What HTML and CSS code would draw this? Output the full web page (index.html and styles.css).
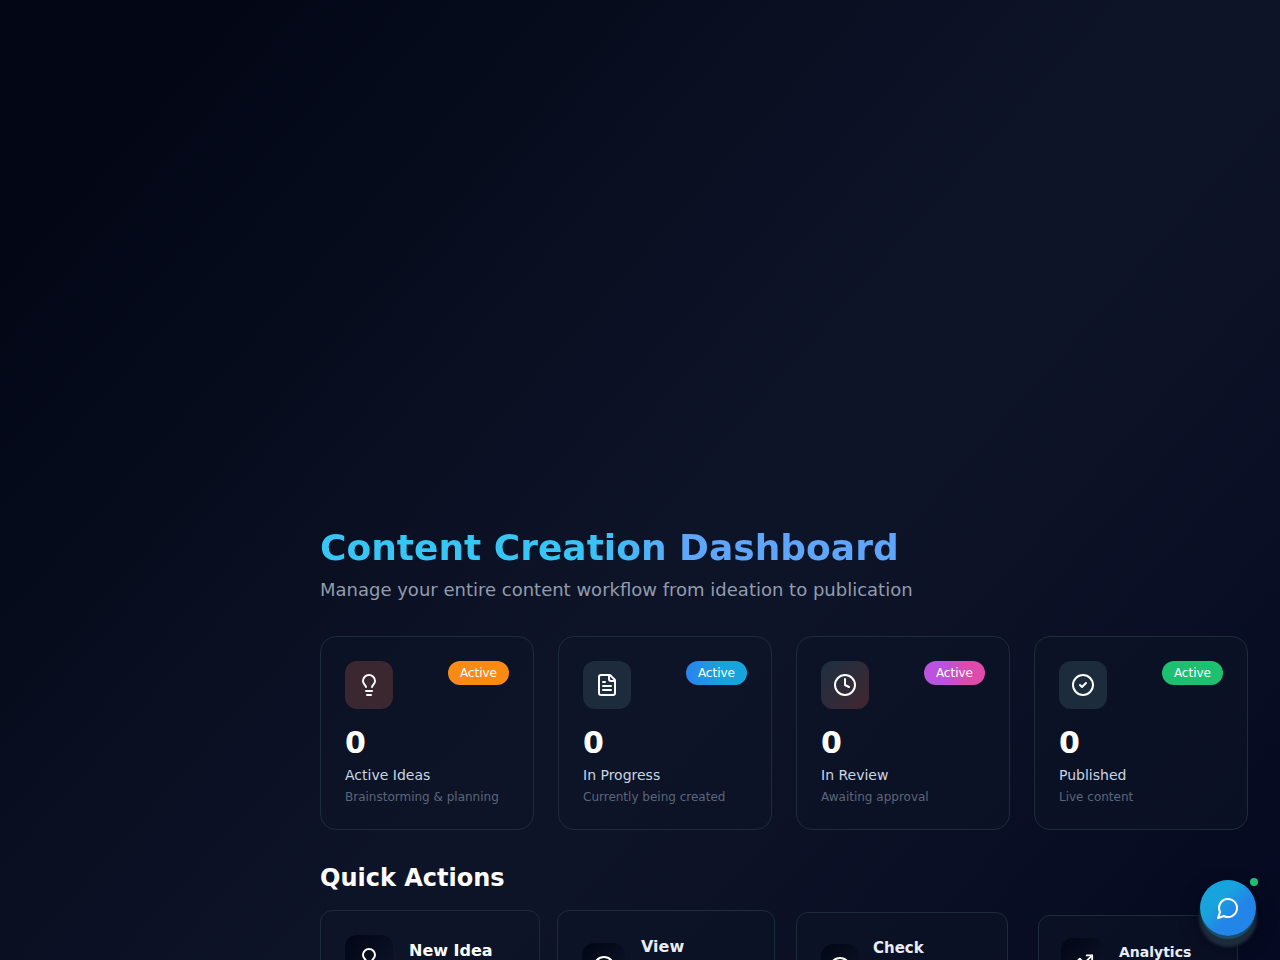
FILE: index.html
```html
<!DOCTYPE html>
<html lang="en">
<head>
    <meta charset="UTF-8">
    <meta name="viewport" content="width=device-width, initial-scale=1.0">
    <title>Content Creation Dashboard</title>
    <link rel="stylesheet" href="styles.css">
</head>
<body>

    <main class="dashboard">
        <header class="page-header">
            <h1>Content Creation Dashboard</h1>
            <p>Manage your entire content workflow from ideation to publication</p>
        </header>

        <section class="stats">
            <article class="stat-card">
                <div class="stat-top">
                    <div class="stat-icon icon-ideas">
                        <svg class="icon" viewBox="0 0 24 24"><path d="M15 14c.2-1 .7-1.700 1.500-2.500 1-.9 1.500-2.200 1.500-3.500A6 6 0 0 0 6 8c0 1 .2 2.200 1.500 3.500.7.7 1.300 1.500 1.500 2.500"/><path d="M9 18h6"/><path d="M10 22h4"/></svg>
                    </div>
                    <span class="badge badge-orange">Active</span>
                </div>
                <div class="stat-value">0</div>
                <h3>Active Ideas</h3>
                <p>Brainstorming &amp; planning</p>
            </article>

            <article class="stat-card">
                <div class="stat-top">
                    <div class="stat-icon icon-progress">
                        <svg class="icon" viewBox="0 0 24 24"><path d="M15 2H6a2 2 0 0 0-2 2v16a2 2 0 0 0 2 2h12a2 2 0 0 0 2-2V7Z"/><path d="M14 2v4a2 2 0 0 0 2 2h4"/><path d="M10 9H8"/><path d="M16 13H8"/><path d="M16 17H8"/></svg>
                    </div>
                    <span class="badge badge-blue">Active</span>
                </div>
                <div class="stat-value">0</div>
                <h3>In Progress</h3>
                <p>Currently being created</p>
            </article>

            <article class="stat-card">
                <div class="stat-top">
                    <div class="stat-icon icon-review">
                        <svg class="icon" viewBox="0 0 24 24"><circle cx="12" cy="12" r="10"/><path d="M12 6v6l4 2"/></svg>
                    </div>
                    <span class="badge badge-pink">Active</span>
                </div>
                <div class="stat-value">0</div>
                <h3>In Review</h3>
                <p>Awaiting approval</p>
            </article>

            <article class="stat-card">
                <div class="stat-top">
                    <div class="stat-icon icon-published">
                        <svg class="icon" viewBox="0 0 24 24"><circle cx="12" cy="12" r="10"/><path d="m9 12 2 2 4-4"/></svg>
                    </div>
                    <span class="badge badge-green">Active</span>
                </div>
                <div class="stat-value">0</div>
                <h3>Published</h3>
                <p>Live content</p>
            </article>
        </section>

        <section>
            <h2>Quick Actions</h2>
            <div class="actions">
                <button type="button" class="action-card">
                    <span class="action-icon">
                        <svg class="icon" viewBox="0 0 24 24"><path d="M15 14c.2-1 .7-1.700 1.500-2.500 1-.9 1.500-2.200 1.500-3.500A6 6 0 0 0 6 8c0 1 .2 2.200 1.500 3.500.7.7 1.300 1.500 1.500 2.500"/><path d="M9 18h6"/><path d="M10 22h4"/></svg>
                    </span>
                    <span class="action-text">New Idea</span>
                </button>
                <button type="button" class="action-card action-view">
                    <span class="action-icon">
                        <svg class="icon" viewBox="0 0 24 24"><circle cx="12" cy="12" r="10"/><path d="M12 6v6l4 2"/></svg>
                    </span>
                    <span class="action-text">View</span>
                </button>
                <button type="button" class="action-card action-check">
                    <span class="action-icon">
                        <svg class="icon" viewBox="0 0 24 24"><circle cx="12" cy="12" r="10"/><path d="m9 12 2 2 4-4"/></svg>
                    </span>
                    <span class="action-text">Check</span>
                </button>
                <button type="button" class="action-card action-analytics">
                    <span class="action-icon">
                        <svg class="icon" viewBox="0 0 24 24"><path d="m22 7-8.500 8.500-5-5L2 17"/><path d="M16 7h6v6"/></svg>
                    </span>
                    <span class="action-text">Analytics</span>
                </button>
            </div>
        </section>
    </main>

    <button type="button" class="chat-button" aria-label="Open chat">
        <svg class="icon" viewBox="0 0 24 24"><path d="M7.900 20A9 9 0 1 0 4 16.100L2 22Z"/></svg>
        <span class="chat-status"></span>
    </button>

</body>
</html>
```
FILE: styles.css
```css
* {
    box-sizing: border-box;
    margin: 0;
    padding: 0;
}

html {
    background-color: #020617;
}

body {
    min-height: 150vh;
    font-family: "DejaVu Sans", sans-serif;
    color: #ffffff;
    background: linear-gradient(to bottom right, #020615 8%, #0e1428 45%, #0e1428 52%, #040820 86%) no-repeat;
    background-size: 100% 150vh;
}

.dashboard {
    margin-left: 288px;
    padding: 528px 32px 32px;
}

/* header */
.page-header {
    margin-bottom: 32px;
}

.page-header h1 {
    margin-bottom: 8px;
    font-size: 36px;
    line-height: 40px;
    color: transparent;
    background: linear-gradient(to right, #36c5f4 28%, #5fa6fa 40%);
    -webkit-background-clip: text;
    background-clip: text;
}

.page-header p {
    font-size: 18px;
    line-height: 28px;
    color: #919cae;
}

.icon {
    width: 24px;
    height: 24px;
    flex-shrink: 0;
    fill: none;
    stroke: #ffffff;
    stroke-width: 2;
    stroke-linecap: round;
    stroke-linejoin: round;
}

/* stats */
.stats {
    display: grid;
    grid-template-columns: repeat(4, 1fr);
    gap: 24px;
    margin-bottom: 32px;
}

.stat-card {
    padding: 24px;
    border: 1px solid #1c2c3b;
    border-radius: 16px;
    background-color: rgba(14, 20, 38, 0.6);
}

.stat-top {
    display: flex;
    justify-content: space-between;
    align-items: flex-start;
    margin-bottom: 16px;
}

.stat-icon {
    display: flex;
    align-items: center;
    justify-content: center;
    width: 48px;
    height: 48px;
    border-radius: 12px;
}

.icon-ideas {
    background-color: #3a2730;
}

.icon-progress,
.icon-published {
    background-color: #1c2c3c;
}

.icon-review {
    background: linear-gradient(to bottom right, #1c3042, #42262f);
}

.badge {
    padding: 4px 12px;
    border-radius: 12px;
    font-size: 12px;
    line-height: 16px;
}

.badge-orange {
    background-color: #f98b14;
}

.badge-blue {
    background: linear-gradient(to right, #2b83ec, #17a4dc 60%);
}

.badge-pink {
    background: linear-gradient(to right, #bb52e0 30%, #df4bab 70%);
}

.badge-green {
    background-color: #1dc071;
}

.stat-value {
    margin-bottom: 4px;
    font-size: 30px;
    font-weight: bold;
    line-height: 36px;
}

.stat-card h3 {
    margin-bottom: 4px;
    font-size: 14px;
    font-weight: normal;
    line-height: 20px;
    color: #cbd5e1;
}

.stat-card p {
    font-size: 12px;
    line-height: 16px;
    color: #5b6678;
}

/* quick actions */
h2 {
    margin-bottom: 16px;
    font-size: 24px;
    line-height: 32px;
}

.actions {
    display: grid;
    grid-template-columns: repeat(4, 1fr);
    gap: 16px;
}

.action-card {
    display: flex;
    align-items: flex-start;
    gap: 16px;
    min-height: 114px;
    padding: 24px;
    border: 1px solid #1c2c3b;
    border-radius: 12px;
    background-color: rgba(14, 20, 38, 0.6);
    color: #ffffff;
    font-family: inherit;
    font-size: 16px;
    font-weight: bold;
    line-height: 24px;
    text-align: left;
    cursor: pointer;
}

.action-icon {
    display: flex;
    align-items: center;
    justify-content: center;
    flex-shrink: 0;
    width: 48px;
    height: 48px;
    border-radius: 12px;
    background: linear-gradient(to bottom right, #020615, #0e1428);
}

.action-text {
    padding-top: 4px;
}

.action-view {
    margin: 0 1px;
}

.action-view .action-icon {
    width: 43px;
    margin-top: 8px;
}

.action-view .action-text,
.action-check .action-text {
    padding-top: 0;
    color: #e8edf6;
}

.action-check {
    gap: 14px;
    margin: 2px 4px;
    padding-top: 23px;
    font-size: 15px;
}

.action-check .action-icon {
    width: 38px;
    margin-top: 8px;
}

.action-analytics {
    gap: 15px;
    margin: 5px 10px;
    padding: 22px;
    font-size: 14px;
}

.action-analytics .action-icon {
    width: 43px;
    height: 44px;
}

.action-analytics .icon {
    width: 22px;
    height: 22px;
}

.action-analytics .action-text {
    padding-top: 2px;
    color: #e8edf6;
}

/* floating chat */
.chat-button {
    position: fixed;
    right: 24px;
    bottom: 24px;
    display: flex;
    align-items: center;
    justify-content: center;
    width: 56px;
    height: 56px;
    border: none;
    border-radius: 50%;
    background: linear-gradient(to bottom right, #17a4dc 35%, #2385e8 60%);
    box-shadow: 0 4px 0 -1px #1c4d68, 0 10px 3px 1px #1c2c3c, 0 8px 16px 4px rgba(2, 6, 23, 0.6);
    cursor: pointer;
}

.chat-status {
    position: absolute;
    top: -2px;
    right: -2px;
    width: 8px;
    height: 8px;
    border-radius: 50%;
    background-color: #1dc071;
}
```
